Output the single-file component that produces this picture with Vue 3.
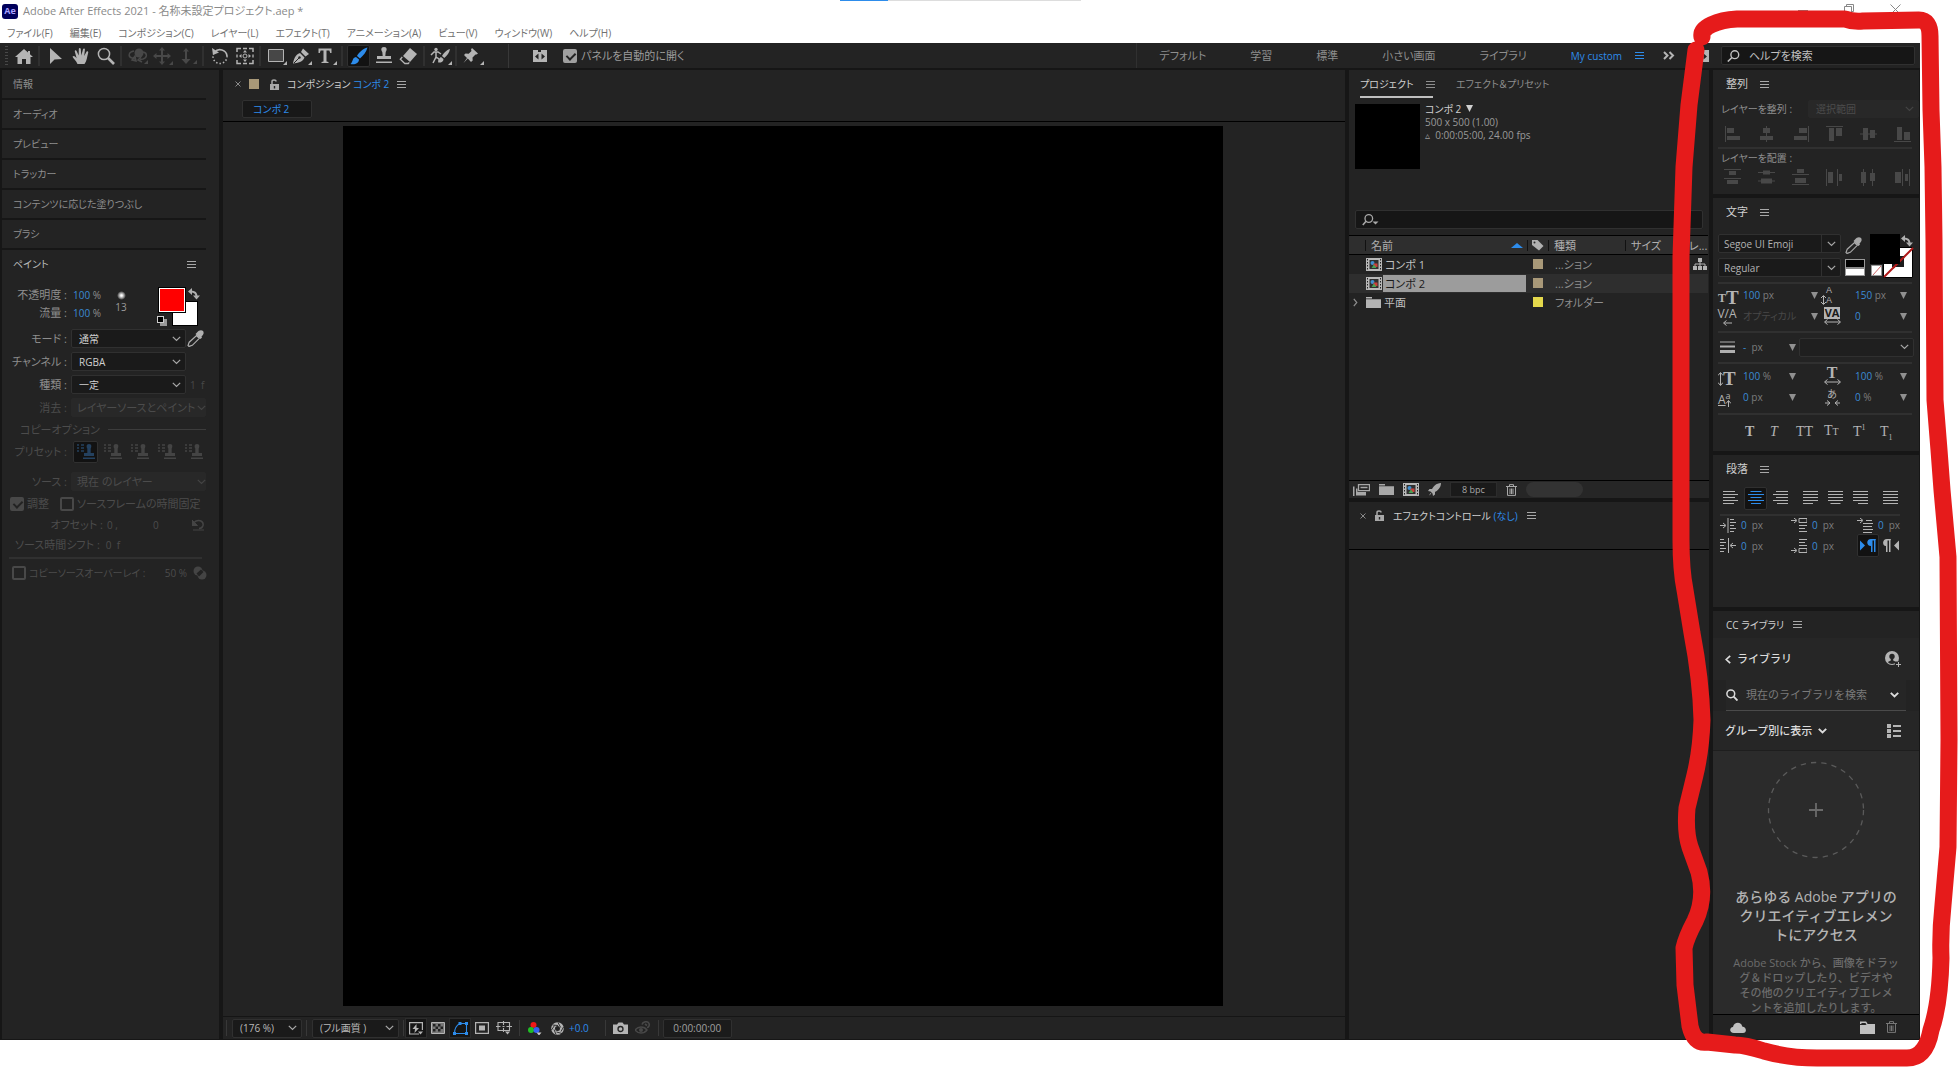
<script setup>
import { h } from 'vue'

const glyphs = {
  home: [18, 16, '<path d="M9 1 0 9h2.500v7H7v-5h4v5h4.500V9H18l-3-2.700V3h-2v1.500z" fill="currentColor"/>'],
  arrow: [14, 18, '<path d="M1 1v16l4.500-4.500L13 12z" fill="currentColor"/>'],
  hand: [18, 18, '<path d="M5.500 17C4 14 2 12 .5 9.800c.6-1 1.700-1 2.500-.2l1.600 1.600L2.800 4.500c-.2-1.300 1.300-1.800 1.800-.6L6.700 8.600 6.800 2c.1-1.300 1.800-1.300 2 0l.5 6.500L11 2.300c.4-1.200 2-.9 1.900.4L12.200 9l2.300-4.200c.7-1 2-.3 1.700.9C15 9.700 15 14 12.500 17z" fill="currentColor"/>'],
  zoom: [18, 18, '<circle cx="7" cy="7" r="5.600" fill="none" stroke="currentColor" stroke-width="1.500"/><path d="M11 11l6 6" stroke="currentColor" stroke-width="2.600"/>'],
  orbit: [20, 18, '<circle cx="11" cy="6" r="4.500" fill="currentColor"/><path d="M6 4C0 5 0 10 4 11l3 1M15 5c5 1 4 6 0 7l-3 .5M7 9l1 5-4-1zM13 10l-3 3 4 2" fill="none" stroke="currentColor" stroke-width="1.500"/><path d="M20 13v4h-4z" fill="currentColor"/>'],
  pan: [20, 18, '<path d="M9 0l3 3.500h-2V8h4.500V6L18 9l-3.500 3v-2H10v4.500h2L9 18l-3-3.500h2V10H3.500v2L0 9l3.500-3v2H8V3.500H6z" fill="currentColor"/><path d="M20 14v4h-4z" fill="currentColor"/>'],
  dolly: [18, 18, '<path d="M7 1l3 3.500H8V12h3.500L7 17l-4.500-5H6V4.500H4z" fill="currentColor"/><path d="M18 13v4h-4z" fill="currentColor"/>'],
  rotate: [18, 18, '<path d="M3.500 5.500A7 7 0 0 1 16 9" fill="none" stroke="currentColor" stroke-width="1.700"/><path d="M1 1l1 7 6-2.500z" fill="currentColor"/><path d="M16 9A7 7 0 1 1 2.500 7" fill="none" stroke="currentColor" stroke-width="1.500" stroke-dasharray="1.500 2"/>'],
  anchor: [18, 18, '<path d="M1 5V1.500h4M13 1.500h4V5M17 13v3.500h-4M5 16.500H1V13" fill="none" stroke="currentColor" stroke-width="1.500"/><path d="M7 1.500h4M7 16.500h4M1 7.500v3M17 7.500v3" stroke="currentColor" stroke-width="1.300"/><circle cx="9" cy="9" r="2" fill="none" stroke="currentColor"/><path d="M9 3l2 2.500H7zM9 15l2-2.500H7zM3 9l2.500-2v4zM15 9l-2.500-2v4z" fill="currentColor"/>'],
  rect: [20, 18, '<path d="M1.500 2.500h15v12h-15z" fill="#474747" stroke="currentColor"/><path d="M20 14v4h-4z" fill="currentColor"/>'],
  pen: [20, 18, '<path d="M1 16.500C2 12 3 8 8 6l4.500 4.500C11 15 6 16 1 16.500zM9 5l2-3.500L17 7l-3.500 2.500z" fill="currentColor"/><path d="M2 16l5-5" stroke="#232323"/><circle cx="7.500" cy="10.500" r="1.200" fill="#232323"/><path d="M20 14v4h-4z" fill="currentColor"/>'],
  type: [20, 18, '<path d="M1.500 1.500h13V6h-1.300l-.8-2.500H9.500v11l2 .5v1h-7v-1l2-.5v-11H3.600L2.800 6H1.500z" fill="currentColor"/><path d="M20 14v4h-4z" fill="currentColor"/>'],
  brush: [18, 18, '<path d="M17.500.5C13 1.500 8.500 6 7 9l3 2.500c3.500-3 6.500-7 7.500-11zM6 10l3 2.500c0 3.500-4 5.500-8.500 4.500C3 15.500 2 10.500 6 10z" fill="currentColor"/>'],
  stamp: [18, 18, '<path d="M9 0c3.500 0 3 3.500 1.700 5L10.300 9H16v3H2V9h5.700l-.4-4C6 3.500 5.500 0 9 0zM1 14.500h16V16H1z" fill="currentColor"/>'],
  eraser: [20, 18, '<path d="M11 1l7 6-7 8-7-6z" fill="currentColor"/><path d="M3.300 10l-2 2.300 4.500 4.200h3.500l1-1.200" fill="none" stroke="currentColor" stroke-width="1.300"/>'],
  roto: [22, 18, '<circle cx="6" cy="2.500" r="1.700" fill="currentColor"/><path d="M1 8l3-3h4l3 2M6 5v5l-3 6M6 10l3 2v3" fill="none" stroke="currentColor" stroke-width="1.500"/><path d="M20 2c-4 1-7 5-8 7l2.300 2c3-2.500 5-5 5.700-9zM11 10l2.500 2c0 3-3 4-5.500 3.500 1.500-1 .5-4.500 3-5.500z" fill="currentColor"/><path d="M22 14v4h-4z" fill="currentColor"/>'],
  pin: [22, 18, '<path d="M10 1l6 5.500-1.500 1-1 0-3 3 .2 3L9 15l-3.200-3.500L1.500 16l3.500-5-3-3 1.500-1.500 3.200.2L9.500 4 9 2.500z" fill="currentColor"/><path d="M22 14v4h-4z" fill="currentColor"/>'],
  panels: [14, 13, '<path d="M0 1h5v2h3V1h6v12H0z" fill="currentColor"/><path d="M5.500 4.500v6L2 7.500zM8.500 4.500v6L12 7.500z" fill="#232323"/>'],
  menu: [9, 9, '<path d="M0 1.500h9M0 4.500h9M0 7.500h9" stroke="currentColor"/>'],
  chev: [9, 6, '<path d="M.8.800 4.500 4.500 8.200.800" fill="none" stroke="currentColor" stroke-width="1.200"/>'],
  chevBold: [9, 6, '<path d="M.8.800 4.500 4.500 8.200.800" fill="none" stroke="currentColor" stroke-width="1.900"/>'],
  back: [6, 9, '<path d="M5.200.800 1.200 4.500l4 3.700" fill="none" stroke="currentColor" stroke-width="1.700"/>'],
  more: [12, 9, '<path d="M1 1l3.500 3.500L1 8M6.500 1 10 4.500 6.500 8" fill="none" stroke="currentColor" stroke-width="2"/>'],
  close: [6, 6, '<path d="M.5.500l5 5M5.500.500l-5 5" stroke="#8a8a8a" stroke-width="1"/>'],
  lock: [9, 11, '<path d="M0 5h9v6H0z" fill="currentColor"/><path d="M2 5V2.500C2 .5 6 .5 6 2.500" fill="none" stroke="currentColor" stroke-width="1.500"/><path d="M4.500 7v2.500" stroke="#232323" stroke-width="1.400"/>'],
  search: [13, 12, '<circle cx="7.800" cy="4.700" r="3.900" fill="none" stroke="currentColor" stroke-width="1.400"/><path d="M5 7.500.8 11.500" stroke="currentColor" stroke-width="1.600"/>'],
  searchMenu: [17, 12, '<circle cx="6.800" cy="4.500" r="3.800" fill="none" stroke="currentColor" stroke-width="1.300"/><path d="M4 7.300.8 11" stroke="currentColor" stroke-width="1.600"/><path d="M10.500 7.500h6l-3 3z" fill="currentColor"/>'],
  find: [12, 12, '<circle cx="4.800" cy="4.800" r="3.900" fill="none" stroke="currentColor" stroke-width="1.500"/><path d="M7.700 7.700l3.800 3.800" stroke="currentColor" stroke-width="1.900"/>'],
  swap: [12, 12, '<path d="M3 3.500c4 0 5.500 1.500 5.500 5" fill="none" stroke="currentColor" stroke-width="2"/><path d="M0 3.500 4 0v7zM5 7.500h7l-3.500 4z" fill="currentColor"/>'],
  dropper: [17, 17, '<path d="M10 2.500C12-.5 15-.2 16 1s1 3.500-1.500 5.500l.5 1-1.500 1.500L8.500 4 10 2.500z" fill="currentColor"/><path d="M9.500 5.500l2.800 2.800-7 7c-1.300.7-2 .5-3.300 1.200l-1-1c.7-1.300.5-2 1.200-3.300z" fill="none" stroke="currentColor" stroke-width="1.200"/>'],
  preset: [18, 16, '<path d="M0 1h2M0 4h2M0 7h2M4 1h3M4 4h3M4 7h3" stroke="currentColor" stroke-width="1.300"/><path d="M12 0c3 0 2.600 3 1.700 4.500V9H17v3H7V9h3.300V4.500C9.400 3 9 0 12 0zM6 13.500h12V15H6z" fill="currentColor"/>'],
  undo: [13, 12, '<path d="M2 3.500C6-.5 12 2 11 6.500 10.500 8.500 9 9.500 7 9.500" fill="none" stroke="currentColor" stroke-width="1.500"/><path d="M0 1v5.500h5.500zM1 11h11" stroke="currentColor" fill="currentColor"/>'],
  overlay: [14, 14, '<circle cx="5" cy="5" r="4.500" fill="currentColor"/><circle cx="9" cy="9" r="4.500" fill="currentColor"/><path d="M3.500 7.500 8 3.500 10.500 6 6 10.500z" fill="#232323"/>'],
  comp: [16, 13, '<path d="M0 0h16v13H0z" fill="#b8b8b8"/><path d="M1.500 1v11M14.500 1v11" stroke="#232323" stroke-dasharray="1.500 1.500"/><path d="M3.500 2h9v9h-9z" fill="#303030"/><circle cx="6.500" cy="5" r="2" fill="#3f8fd0"/><path d="M7.500 5.500h4v3.500h-4z" fill="#c8403a"/><path d="M8 6.500l2.500 3.500H5.500z" fill="#4aa055"/>'],
  folder: [15, 11, '<path d="M0 0h6v1.500H0zM0 2.200h15V11H0z" fill="currentColor"/>'],
  folderNew: [15, 13, '<path d="M.7 3V1.200h5L7 3" fill="none" stroke="currentColor" stroke-width="1.400"/><path d="M0 4h5.500l1.500-1H15v10H0z" fill="currentColor"/>'],
  tag: [13, 12, '<path d="M1 1h5.500L12.500 7 8 11.500 1 6z" fill="currentColor"/><circle cx="3.500" cy="3.500" r="1" fill="#2d2d2d"/>'],
  flow: [14, 12, '<path d="M5 0h4v4H5zM0 8h4v4H0zM5 8h4v4H5zM10 8h4v4h-4z" fill="currentColor"/><path d="M7 4v4M2 8V6h10v2" fill="none" stroke="currentColor"/>'],
  twirl: [5, 9, '<path d="M.8.800l3 3.700-3 3.700" fill="none" stroke="currentColor" stroke-width="1.200"/>'],
  interpret: [17, 12, '<path d="M5.500.700h11v6h-11z" fill="none" stroke="currentColor" stroke-width="1.300"/><path d="M7.500 3.500h7" stroke="currentColor" stroke-width="1.500"/><path d="M3 4.500h1.500V8H13v3.500H3zM0 2.500h1.500V12H0z" fill="currentColor"/>'],
  rocket: [13, 13, '<path d="M13 0C8 0 5 4 4 6H1.500L0 8l2.500.500 2 2L5 13l2-1.500V9c2-1 6-4 6-9zM2.500 10l.8.800L1 12.500z" fill="currentColor"/>'],
  trash: [11, 12, '<path d="M0 2.500h11M3.500 2V.600h4V2M1.500 3v8.400h8V3M4 4.500v5.500M5.500 4.500v5.500M7 4.500v5.500" fill="none" stroke="currentColor"/>'],
  fast: [14, 13, '<path d="M10 12H.6V.600h12.800V8" fill="none" stroke="currentColor" stroke-width="1.200"/><path d="M7.500 2 3.500 7h2.500L5.500 11 10 6H7.500zM9 9.500h5l-2.500 3z" fill="currentColor"/>'],
  checker: [14, 12, '<path d="M.5.500h13v11H.5z" fill="#777" stroke="currentColor"/><path d="M2 2h2.500v2.500H2zM7 2h2.500v2.500H7zM4.500 4.500H7V7H4.500zM9.500 4.500H12V7H9.500zM2 7h2.500v2.500H2zM7 7h2.500v2.500H7z" fill="#222"/>'],
  mask: [15, 13, '<path d="M1.500 11.500C1.500 6 4 3 7 1.500h6.500v10z" fill="none" stroke="currentColor" stroke-width="1.100"/><path d="M0 10h3v3H0zM12 10h3v3h-3zM12 0h3v3h-3zM5.500 0h3v3h-3z" fill="currentColor"/>'],
  region: [14, 12, '<path d="M.6.600h12.800v10.800H.600z" fill="none" stroke="currentColor" stroke-width="1.200"/><path d="M4 3.500h6v5H4z" fill="currentColor"/>'],
  guides: [16, 14, '<path d="M2 1.500h11.500v8H2zM7.500 0v4M7.500 7v4M0 5.500h4.500M10.500 5.500H16M6.500 5.500h2" fill="none" stroke="currentColor" stroke-width="1.100"/><path d="M9 10.500h5l-2.500 3z" fill="currentColor"/>'],
  rgb: [14, 13, '<circle cx="5.500" cy="3" r="3" fill="#f01818"/><circle cx="3" cy="8" r="3" fill="#1fbf25"/><circle cx="8.500" cy="8" r="3" fill="#3560f0"/><path d="M8.500 10.500h5l-2.500 3z" fill="#ccc"/>'],
  shutter: [13, 13, '<circle cx="6.500" cy="6.500" r="4.400" fill="none" stroke="currentColor" stroke-width="3.800"/><path d="M1.500 3l5.500.5M7 .5l2.700 5M12.500 5l-2.500 4.500M11 11.500 5.500 10M5 12.500l-2-5M.500 8l3-4.500" stroke="#232323" stroke-width=".9"/>'],
  camera: [15, 12, '<path d="M0 2.500h4L5.500.500h4L11 2.500h4V12H0z" fill="currentColor"/><circle cx="7.500" cy="7" r="2.500" fill="none" stroke="#232323" stroke-width="1.300"/>'],
  snap: [16, 14, '<path d="M0 9c3-4 9-4 12 0-3 4-9 4-12 0z" fill="none" stroke="currentColor" stroke-width="1.400"/><circle cx="6" cy="9" r="2" fill="currentColor"/><path d="M7 3.500C8 0 13 0 14 2.500s-1 4-2 4M10 3l2 1.500" fill="none" stroke="currentColor" stroke-width="1.600"/>'],
  alL: [16, 16, '<path d="M.5 0v16" stroke="currentColor"/><path d="M2 2h7v5H2zM2 10h13v4H2z" fill="currentColor"/>'],
  alC: [16, 16, '<path d="M7.500 0v16" stroke="currentColor"/><path d="M4 2h7v5H4zM1 10h13v4H1z" fill="currentColor"/>'],
  alR: [16, 16, '<path d="M15.500 0v16" stroke="currentColor"/><path d="M6 2h8v5H6zM1 10h13v4H1z" fill="currentColor"/>'],
  alT: [17, 16, '<path d="M0 .500h17" stroke="currentColor"/><path d="M3 2h5v13H3zM10 2h6v8h-6z" fill="currentColor"/>'],
  alM: [17, 16, '<path d="M0 8h17" stroke="currentColor"/><path d="M3 2h5v12H3zM10 4h5v8h-5z" fill="currentColor"/>'],
  alB: [17, 16, '<path d="M0 15.500h17" stroke="currentColor"/><path d="M3 1h5v13H3zM10 6h6v8h-6z" fill="currentColor"/>'],
  diT: [17, 16, '<path d="M0 .500h17M0 9.500h17" stroke="currentColor"/><path d="M5 2h7v4H5zM3 11h11v4H3z" fill="currentColor"/>'],
  diM: [17, 16, '<path d="M0 3.500h17M0 12h17" stroke="currentColor"/><path d="M5 1.500h7v4H5zM3 9.500h11v5H3z" fill="currentColor"/>'],
  diB: [17, 16, '<path d="M0 5.500h17M0 15.500h17" stroke="currentColor"/><path d="M5 0h7v4H5zM3 9h11v5H3z" fill="currentColor"/>'],
  diL: [16, 17, '<path d="M.5 0v17M11.500 0v17" stroke="currentColor"/><path d="M2 3h5v11H2zM13 5h3v7h-3z" fill="currentColor"/>'],
  diC: [16, 17, '<path d="M3.500 0v17M12.500 0v17" stroke="currentColor"/><path d="M1 3h5v11H1zM10 4h5v8h-5z" fill="currentColor"/>'],
  diR: [16, 17, '<path d="M8.500 0v17M15.500 0v17" stroke="currentColor"/><path d="M1 3h6v11H1zM11 5h3v7h-3z" fill="currentColor"/>'],
  updown: [5, 14, '<path d="M2.500 1v12M0 3.500 2.500.500 5 3.500M0 10.500l2.500 3 2.500-3" fill="none" stroke="currentColor"/>'],
  updownS: [5, 10, '<path d="M2.500 1v8M0 3 2.500.500 5 3M0 7l2.500 2.500L5 7" fill="none" stroke="currentColor"/>'],
  leftright: [17, 6, '<path d="M1 3h15M3.500.500.500 3l3 2.500M13.500.500l3 2.500-3 2.500" fill="none" stroke="currentColor"/>'],
  left: [9, 6, '<path d="M1 3h8M3.500.500.500 3l3 2.500" fill="none" stroke="currentColor"/>'],
  inout: [15, 6, '<path d="M0 3h4M2 .500 5 3 2 5.500M15 3h-4M13 .500 10 3l3 2.500" fill="none" stroke="currentColor"/>'],
  up: [5, 7, '<path d="M2.500 1v6M0 3.500 2.500.500 5 3.500" fill="none" stroke="currentColor"/>'],
  stroke: [15, 12, '<path d="M0 1h15" stroke="currentColor"/><path d="M0 5.500h15" stroke="currentColor" stroke-width="2"/><path d="M0 10.500h15" stroke="currentColor" stroke-width="3"/>'],
  down: [7, 7, '<path d="M0 0h7L3.500 7z" fill="currentColor"/>'],
  tL: [15, 14, '<path d="M0 .500h12M0 3.500h15M0 6.500h12M0 9.500h15M0 12.500h11" stroke="currentColor"/>'],
  tC: [16, 14, '<path d="M2.500 .500h11M0 3.500h16M2.500 6.500h11M0 9.500h16M3 12.500h10" stroke="currentColor"/>'],
  tR: [15, 14, '<path d="M3 .500h12M0 3.500h15M3 6.500h12M0 9.500h15M4 12.500h11" stroke="currentColor"/>'],
  jL: [15, 14, '<path d="M0 .500h15M0 3.500h15M0 6.500h15M0 9.500h15M0 12.500h10" stroke="currentColor"/>'],
  jC: [15, 14, '<path d="M0 .500h15M0 3.500h15M0 6.500h15M0 9.500h15M2.500 12.500h10" stroke="currentColor"/>'],
  jR: [15, 14, '<path d="M0 .500h15M0 3.500h15M0 6.500h15M0 9.500h15M5 12.500h10" stroke="currentColor"/>'],
  jF: [15, 14, '<path d="M0 .500h15M0 3.500h15M0 6.500h15M0 9.500h15M0 12.500h15" stroke="currentColor"/>'],
  indL: [16, 15, '<path d="M0 7.500h5M3 5l3 2.500L3 10M8 0v15M10 1.500h4M10 4.500h6M10 7.500h4M10 10.500h6M10 13.500h4" fill="none" stroke="currentColor"/>'],
  indR: [16, 15, '<path d="M16 7.500h-5M13 5l-3 2.500L13 10M8.500 0v15M0 1.500h4M0 4.500h6M0 7.500h4M0 10.500h6M0 13.500h4" fill="none" stroke="currentColor"/>'],
  spB: [16, 15, '<path d="M0 2.500h5M3 0l3 2.500L3 5M8 .500h8v4H8zM8 7.500h8M8 10.500h6M8 13.500h8" fill="none" stroke="currentColor"/>'],
  spA: [16, 15, '<path d="M0 12.500h5M3 10l3 2.500L3 15M8 10.500h8v4H8zM8 1.500h8M8 4.500h6M8 7.500h8" fill="none" stroke="currentColor"/>'],
  first: [16, 15, '<path d="M0 2.500h5M3 0l3 2.500L3 5M9 2.500h6M6 5.500h10M6 8.500h9M6 11.500h10M6 14.500h9" fill="none" stroke="currentColor"/>'],
  ltr: [17, 13, '<path d="M0 1.500l5 5-5 5zM16 0h-5C6 0 6 7 11 7v6h1.500V1.500H14V13h1.500V1.500z" fill="currentColor"/>'],
  rtl: [17, 13, '<path d="M17 1.500l-5 5 5 5zM9 0H5C0 0 0 7 4 7v6h1.500V1.500H7V13h1.500V1.500z" fill="currentColor"/>'],
  user: [16, 16, '<circle cx="7" cy="7" r="7" fill="currentColor"/><circle cx="7" cy="5.500" r="2.700" fill="#262626"/><path d="M5.800 8h2.400v1.500l3 1.500C9.500 13.500 4.500 13.500 2.800 11l3-1.500zM10 10.500h6V16h-6z" fill="#262626"/><path d="M13.500 11v5M11 13.500h5" stroke="currentColor"/>'],
  list: [14, 14, '<path d="M0 0h4v4H0zM0 5h4v4H0zM0 10h4v4H0zM6 1h8v2H6zM6 6h8v2H6zM6 11h8v2H6z" fill="currentColor"/>'],
  cloud: [16, 11, '<path d="M4 11C-1 11-.8 5.500 3 5 4-.5 11.500-.5 12.200 4.500 17 5 17 11 13 11z" fill="currentColor"/>'],
  ring: [98, 98, '<circle cx="49" cy="49" r="47.500" fill="none" stroke="#5a5a5a" stroke-width="1.300" stroke-dasharray="5.300 5.100"/><path d="M49 42v14M42 49h14" stroke="#6a6a6a" stroke-width="1.800"/>']
}
const Icon = (p) => {
  const [w, ht, d] = glyphs[p.n]
  return h('svg', { width: w, height: ht, viewBox: `0 0 ${w} ${ht}`, 'aria-hidden': 'true', innerHTML: d })
}
Icon.props = ['n']

const menus = ['ファイル(F)', '編集(E)', 'コンポジション(C)', 'レイヤー(L)', 'エフェクト(T)', 'アニメーション(A)', 'ビュー(V)', 'ウィンドウ(W)', 'ヘルプ(H)']
const tools = [['home'], ['arrow', 'hand', 'zoom'], ['orbit', 'pan', 'dolly'], ['rotate', 'anchor'], ['rect', 'pen', 'type'], ['brush', 'stamp', 'eraser'], ['roto'], ['pin']]
const dimTools = ['orbit', 'pan', 'dolly']
const workspaces = ['デフォルト', '学習', '標準', '小さい画面', 'ライブラリ']
const closedPanels = ['情報', 'オーディオ', 'プレビュー', 'トラッカー', 'コンテンツに応じた塗りつぶし', 'ブラシ']
const paintSelects = [['モード :', '通常', 'mode'], ['チャンネル :', 'RGBA', 'channel'], ['種類 :', '一定', 'duration']]
const items = [
  { name: 'コンポ 1', type: '...ション', icon: 'comp', flow: true },
  { name: 'コンポ 2', type: '...ション', icon: 'comp', selected: true },
  { name: '平面', type: 'フォルダー', icon: 'folder', folder: true }
]
</script>

<template>
  <div class="page">
    <header class="titlebar">
      <span class="logo">Ae</span>
      <h1>Adobe After Effects 2021 - 名称未設定プロジェクト.aep *</h1>
      <div class="winctl">
        <svg width="10" height="11"><path d="M0 6.500h10" stroke="#888" /></svg>
        <svg width="10" height="11"><path d="M.5 2.500h7v7h-7zM2.500 2V.500h7v7H8" fill="none" stroke="#888" /></svg>
        <svg width="11" height="11"><path d="M.5.500l10 10M10.500.500l-10 10" stroke="#888" /></svg>
      </div>
      <i class="strip"></i>
    </header>
    <nav class="menubar"><button v-for="m in menus" :key="m">{{ m }}</button></nav>

    <div class="window">
      <div class="toolbar">
        <i class="grip"></i>
        <div v-for="(g, i) in tools" :key="i" class="toolgroup">
          <button v-for="t in g" :key="t" class="tool" :class="{ on: t === 'brush', dim: dimTools.includes(t) }" :aria-label="t"><span><Icon :n="t" /></span></button>
        </div>
        <i class="vsep wide"></i>
        <Icon n="panels" class="panelicon" />
        <label class="auto"><input type="checkbox" checked />パネルを自動的に開く</label>
        <div class="spaces">
          <button v-for="w in workspaces" :key="w">{{ w }}</button>
          <button class="current">My custom<Icon n="menu" /></button>
        </div>
        <button class="more" aria-label="more"><Icon n="more" /></button>
        <Icon n="panels" class="syncicon" />
        <label class="help"><Icon n="search" /><input type="text" placeholder="ヘルプを検索" aria-label="ヘルプを検索" /></label>
      </div>

      <main>
        <section class="panel left">
          <h2 v-for="c in closedPanels" :key="c" class="closed">{{ c }}</h2>
          <div class="head"><h2>ペイント</h2><Icon n="menu" class="end" /></div>
          <div class="painttop">
            <dl>
              <dt>不透明度 :</dt><dd><button class="val">100</button> %</dd>
              <dt>流量 :</dt><dd><button class="val">100</button> %</dd>
            </dl>
            <div class="tip"><i></i>13</div>
            <div class="swatches">
              <i class="bg"></i><i class="fg"></i><Icon n="swap" class="swap" /><i class="mini"></i>
            </div>
          </div>
          <div v-for="(s, i) in paintSelects" :key="s[2]" class="prow">
            <label :for="s[2]">{{ s[0] }}</label>
            <span class="sel"><select :id="s[2]"><option>{{ s[1] }}</option></select><Icon n="chev" /></span>
            <Icon v-if="i === 0" n="dropper" />
            <span v-if="i === 2" class="dimtext">1&nbsp; f</span>
          </div>
          <div class="prow off">
            <label for="erase">消去 :</label>
            <span class="sel full"><select id="erase" disabled><option>レイヤーソースとペイント</option></select><Icon n="chev" /></span>
          </div>
          <div class="prow off clone"><span>コピーオプション</span><i></i></div>
          <div class="prow off presets">
            <span class="lab">プリセット :</span>
            <button v-for="n in 5" :key="n" disabled :class="{ on: n === 1 }" :aria-label="'プリセット ' + n"><Icon n="preset" /></button>
          </div>
          <div class="prow off source">
            <label for="src">ソース :</label>
            <span class="sel full"><select id="src" disabled><option>現在 のレイヤー</option></select><Icon n="chev" /></span>
          </div>
          <div class="prow off checks">
            <label><input type="checkbox" checked disabled />調整</label>
            <label><input type="checkbox" disabled />ソースフレームの時間固定</label>
          </div>
          <div class="prow off offset"><span>オフセット :</span><span>0 ,</span><span>0</span><Icon n="undo" /></div>
          <div class="prow off shift"><span>ソース時間シフト :</span><span>0&nbsp; f</span></div>
          <i class="rule"></i>
          <div class="prow off over"><label><input type="checkbox" disabled />コピーソースオーバーレイ :</label><span>50 %</span><Icon n="overlay" /></div>
        </section>

        <section class="panel centre">
          <div class="head viewhead">
            <Icon n="close" /><i class="sq"></i><Icon n="lock" />
            <h2 class="lit">コンポジション <em>コンポ 2</em></h2><Icon n="menu" />
          </div>
          <div class="tabs"><button>コンポ 2</button></div>
          <div class="stage"><div class="canvas"></div></div>
          <div class="viewbar">
            <i class="vsep"></i>
            <span class="sel zoomsel"><select aria-label="拡大率"><option>(176 %)</option></select><Icon n="chev" /></span>
            <i class="vsep"></i>
            <span class="sel ressel"><select aria-label="解像度"><option>(フル画質 )</option></select><Icon n="chev" /></span>
            <i class="vsep"></i>
            <button class="vb box" aria-label="高速プレビュー"><Icon n="fast" /></button>
            <button class="vb" aria-label="透明グリッド"><Icon n="checker" /></button>
            <button class="vb box on" aria-label="マスク"><Icon n="mask" /></button>
            <button class="vb" aria-label="目標範囲"><Icon n="region" /></button>
            <button class="vb" aria-label="ガイド"><Icon n="guides" /></button>
            <i class="vsep gap"></i>
            <button class="vb" aria-label="チャンネル"><Icon n="rgb" /></button>
            <button class="vb" aria-label="露出"><Icon n="shutter" /></button>
            <button class="val expo">+0.0</button>
            <i class="vsep"></i>
            <button class="vb cam" aria-label="スナップショット"><Icon n="camera" /></button>
            <button class="vb dim" aria-label="スナップショットを表示"><Icon n="snap" /></button>
            <i class="vsep"></i>
            <button class="time">0:00:00:00</button>
          </div>
        </section>

        <div class="col">
          <section class="panel project">
            <div class="head">
              <div class="tab"><h2 class="lit">プロジェクト</h2><Icon n="menu" /></div>
              <h2>エフェクト＆プリセット</h2>
            </div>
            <div class="info">
              <div class="thumb"></div>
              <div><p class="lit">コンポ 2 <Icon n="down" /></p><p>500 x 500 (1.00)</p><p>▵&nbsp; 0:00:05:00, 24.00 fps</p></div>
            </div>
            <label class="psearch"><Icon n="searchMenu" /><input type="text" aria-label="プロジェクトを検索" /></label>
            <table>
              <thead>
                <tr><th class="c0"></th><th class="c1"><span>名前<i class="tri"></i></span></th><th class="c2"><Icon n="tag" /></th><th class="c3">種類</th><th class="c4">サイズ</th><th>レ...</th></tr>
              </thead>
              <tbody>
                <tr v-for="it in items" :key="it.name" :class="{ selected: it.selected }">
                  <td class="c0"><Icon v-if="it.folder" n="twirl" /></td>
                  <td class="name"><span><Icon :n="it.icon" /><b>{{ it.name }}</b></span></td>
                  <td class="c2"><i class="sq" :class="{ yellow: it.folder }"></i></td>
                  <td class="c3">{{ it.type }}</td>
                  <td></td>
                  <td class="c5"><Icon v-if="it.flow" n="flow" /></td>
                </tr>
              </tbody>
            </table>
            <div class="pfoot">
              <Icon n="interpret" /><Icon n="folder" /><Icon n="comp" /><Icon n="rocket" />
              <button class="bpc">8 bpc</button><Icon n="trash" /><i class="pill"></i>
            </div>
          </section>
          <section class="panel effects">
            <div class="head viewhead"><Icon n="close" /><Icon n="lock" /><h2 class="lit">エフェクトコントロール <em>(なし)</em></h2><Icon n="menu" /></div>
          </section>
        </div>

        <div class="col right">
          <section class="panel align">
            <div class="head kanji"><h2 class="lit">整列</h2><Icon n="menu" /></div>
            <div class="arow"><label for="al">レイヤーを整列 :</label><span class="sel off"><select id="al" disabled><option>選択範囲</option></select><Icon n="chev" /></span></div>
            <div class="aicons first"><button v-for="n in ['alL', 'alC', 'alR', 'alT', 'alM', 'alB']" :key="n" disabled :aria-label="n"><Icon :n="n" /></button></div>
            <i class="rule"></i>
            <div class="arow second">レイヤーを配置 :</div>
            <div class="aicons"><button v-for="n in ['diT', 'diM', 'diB', 'diL', 'diC', 'diR']" :key="n" disabled :aria-label="n"><Icon :n="n" /></button></div>
          </section>

          <section class="panel char">
            <div class="head kanji"><h2 class="lit">文字</h2><Icon n="menu" /></div>
            <div class="fontrow">
              <div class="fonts">
                <span class="sel split"><select aria-label="フォント"><option>Segoe UI Emoji</option></select><Icon n="chev" /></span>
                <span class="sel split"><select aria-label="スタイル"><option>Regular</option></select><Icon n="chev" /></span>
              </div>
              <div class="pick"><Icon n="dropper" /><i class="bw"></i></div>
              <div class="fills">
                <svg width="44" height="44" viewBox="0 0 44 44"><path d="M13.500 13.500h29v30h-29z" fill="#fff" stroke="#000" /><path d="M14 43 43 14" stroke="#b01818" stroke-width="2" /><path d="M22 22h12v11H22z" fill="#1b1b1b" /><path d="M23 34 34 23" stroke="#b01818" stroke-width="2" /><path d="M0 0h30v30H0z" fill="#000" /><path d="M1.500 31.500h10v10h-10z" fill="#fff" stroke="#999" /><path d="M3 41l8-9" stroke="#c66" /></svg>
                <Icon n="swap" class="swap" />
              </div>
            </div>
            <i class="rule"></i>
            <div class="crow tall">
              <span class="gi"><b class="sm">T</b><b class="lg">T</b></span><span><button class="val">100</button> px</span><Icon n="down" />
              <span class="gi"><Icon n="updownS" /><span class="stack"><u>A</u><u>A</u></span></span><span><button class="val">150</button> px</span><Icon n="down" />
            </div>
            <div class="crow">
              <span class="gi va">V/A<Icon n="left" /></span><span class="dimtext">オプティカル</span><Icon n="down" />
              <span class="gi va"><mark>VA</mark><Icon n="leftright" /></span><span><button class="val">0</button></span><Icon n="down" />
            </div>
            <i class="rule r2"></i>
            <div class="crow stroke"><Icon n="stroke" /><span><button class="val">-</button>&nbsp; px</span><Icon n="down" /><span class="sel"><select aria-label="線の種類"><option></option></select><Icon n="chev" /></span></div>
            <i class="rule r3"></i>
            <div class="crow low tall">
              <span class="gi"><Icon n="updown" /><b class="lg">T</b></span><span><button class="val">100</button> %</span><Icon n="down" />
              <span class="gi va"><b class="md">T</b><Icon n="leftright" /></span><span><button class="val">100</button> %</span><Icon n="down" />
            </div>
            <div class="crow low">
              <span class="gi base"><u>A</u><span class="stack"><span>a</span><Icon n="up" /></span></span><span><button class="val">0</button> px</span><Icon n="down" />
              <span class="gi va"><small>あ</small><Icon n="inout" /></span><span><button class="val">0</button> %</span><Icon n="down" />
            </div>
            <i class="rule r4"></i>
            <div class="styles">
              <button><b>T</b></button><button class="it">T</button><button>TT</button><button>T<small>T</small></button><button>T<sup>1</sup></button><button>T<sub>1</sub></button>
            </div>
          </section>

          <section class="panel para">
            <div class="head kanji"><h2 class="lit">段落</h2><Icon n="menu" /></div>
            <div class="justify">
              <button v-for="n in ['tL', 'tC', 'tR', 'jL', 'jC', 'jR', 'jF']" :key="n" :aria-label="n" :class="[n, { on: n === 'tC' }]"><Icon :n="n" /></button>
            </div>
            <i class="rule"></i>
            <div class="indents">
              <span><Icon n="indL" /><button class="val">0</button> px</span><span><Icon n="spB" /><button class="val">0</button> px</span><span><Icon n="first" /><button class="val">0</button> px</span>
              <span><Icon n="indR" /><button class="val">0</button> px</span><span><Icon n="spA" /><button class="val">0</button> px</span>
              <span class="dir"><button class="on" aria-label="左から右"><Icon n="ltr" /></button><button aria-label="右から左"><Icon n="rtl" /></button></span>
            </div>
          </section>

          <section class="panel cc">
            <div class="head"><h2 class="lit">CC ライブラリ</h2><Icon n="menu" /></div>
            <div class="ccbar lib"><a href="#"><Icon n="back" />ライブラリ</a><Icon n="user" class="grey" /></div>
            <label class="ccbar ccsearch"><Icon n="find" /><input type="text" placeholder="現在のライブラリを検索" aria-label="現在のライブラリを検索" /><Icon n="chevBold" /></label>
            <div class="ccbar group"><button>グループ別に表示<Icon n="chevBold" /></button><Icon n="list" class="grey" /></div>
            <div class="drop">
              <Icon n="ring" />
              <h3>あらゆる Adobe アプリの<br />クリエイティブエレメン<br />トにアクセス</h3>
              <p>Adobe Stock から、画像をドラッ<br />グ＆ドロップしたり、ビデオや<br />その他のクリエイティブエレメ<br />ントを追加したりします。</p>
            </div>
            <div class="ccfoot"><Icon n="cloud" /><Icon n="folderNew" class="end" /><Icon n="trash" class="bin" /></div>
          </section>
        </div>
      </main>
    </div>

    <svg class="marker" viewBox="0 0 290 1069" preserveAspectRatio="none">
      <path d="M33 37C31 27 49 20 68 19L176 19Q184 22 194 21L250 20Q261 20 261 36L262 110L264 167L265 240L266 400L270 450L273 490L279 557L280 740L279 847L274 905Q271 933 272 958Q271 1004 262 1030Q257 1058 238 1058L148 1058Q120 1058 95 1051Q76 1045 66 1045L38 1042Q25 1044 21 1026L16 985L15 948Q17 938 26 921Q37 898 30 872L21 847Q16 832 18 808L26 775Q32 750 33 720Q32 680 23 633L16 590Q12 570 12 540L12 257L15 167L20 105L27 50" fill="none" stroke="#e61b1b" stroke-width="17" stroke-linejoin="round" stroke-linecap="round" />
    </svg>
  </div>
</template>

<style>
html, body { margin: 0; background: #fff; }
</style>

<style scoped>
* { box-sizing: border-box; }
.page { position: relative; display: flex; flex-direction: column; min-height: 100vh; padding: 0 39px 29px 0; background: #fff; color: #8e8e8e; font: 10px/14px "Open Sans", "Noto Sans CJK JP", sans-serif; font-feature-settings: "palt"; white-space: nowrap; }
h1, h2, h3, p, dl, dd { margin: 0; font-size: inherit; font-weight: 400; }
em { font-style: normal; color: #2d8ceb; }
i { display: block; flex: none; }
svg { display: block; flex: none; }
button, input, select { margin: 0; padding: 0; border: 0; background: none; color: inherit; font: inherit; font-feature-settings: inherit; outline: 0; }
.titlebar { position: relative; display: flex; align-items: center; height: 22px; padding-left: 2px; gap: 5px; }
.titlebar h1 { color: #8a8a8a; font-size: 11px; }
.logo { width: 16px; height: 15px; border-radius: 3px; background: #00005b; color: #a9a0ff; font-size: 9px; font-weight: 700; text-align: center; }
.winctl { display: flex; gap: 36px; margin-left: auto; padding-right: 19px; align-self: flex-start; padding-top: 4px; }
.strip { position: absolute; top: 0; left: 840px; width: 241px; height: 1px; background: linear-gradient(90deg, #2d8ceb 48px, #ddd 48px); }
.menubar { display: flex; gap: 17px; height: 21px; padding-left: 7px; color: #707070; align-items: center; }
.window { display: flex; flex-direction: column; flex: 1; background: #161616; }
.toolbar { display: flex; align-items: center; height: 25px; background: #232323; color: #b4b4b4; }
.grip { width: 3px; height: 19px; margin: 0 3px 0 5px; background: repeating-linear-gradient(#484848 0 1px, #232323 1px 3px); }
.toolgroup { display: flex; align-items: center; }
.toolgroup + .toolgroup::before { content: ""; width: 2px; height: 20px; margin: 0 3px 0 2px; background: #303030; }
.tool { display: flex; justify-content: center; width: 25px; }
.tool span { display: grid; place-items: center; width: 23px; height: 22px; }
.tool.on span { background: #121212; border: 1px solid #303030; border-radius: 2px; color: #2d8ceb; }
.tool.dim { color: #484848; }
.vsep { width: 1px; height: 16px; background: #383838; }
.wide { height: 24px; margin: 0 24px 0 23px; }
.auto { display: flex; align-items: center; gap: 4px; margin-left: 16px; color: #9c9c9c; font-size: 11px; }
input[type=checkbox] { position: relative; appearance: none; flex: none; width: 14px; height: 14px; border: 2px solid #8a8a8a; border-radius: 2px; }
input[type=checkbox]:checked { background: #a0a0a0; border-color: #a0a0a0; }
input[type=checkbox]:checked::after { content: ""; position: absolute; left: 3px; top: 0; width: 4px; height: 7px; border: solid #232323; border-width: 0 2px 2px 0; transform: rotate(45deg); }
.off input[type=checkbox] { border-color: #484848; }
.off input[type=checkbox]:checked { background: #484848; }
.spaces { display: flex; align-items: center; align-self: stretch; margin-left: auto; border-left: 1px solid #303030; color: #8e8e8e; font-size: 11px; }
.spaces button { padding: 0 22px; }
.spaces .current { display: flex; align-items: center; gap: 13px; padding-right: 0; color: #2d8ceb; font-size: 10px; }
.more { margin: 0 15px 0 19px; }
.syncicon { margin: 0 12px 0 5px; }
.help { display: flex; align-items: center; gap: 9px; width: 194px; height: 19px; margin-right: 5px; padding-left: 5px; background: #161616; border: 1px solid #303030; border-radius: 2px; color: #c0c0c0; font-size: 11px; }
.help input { flex: 1; min-width: 0; }
.help input::placeholder { color: #c0c0c0; }
main { display: grid; grid-template-columns: 217px minmax(0, 1fr) 360px 206px; gap: 4px; flex: 1; padding: 2px 1px 1px 2px; }
.panel { background: #232323; }
.col { display: flex; flex-direction: column; gap: 4px; min-width: 0; }
.head { display: flex; align-items: center; height: 28px; padding-left: 13px; gap: 12px; color: #8e8e8e; }
.head > svg { color: #a8a8a8; }
.kanji { font-size: 11px; }
.lit { color: #cfcfcf; }
.val { color: #3b8bd4; }
.rule { height: 2px; margin: 0 7px 0 5px; background: #303030; }
.closed { height: 30px; width: 204px; padding-left: 11px; line-height: 28px; border-bottom: 2px solid #161616; }
.left .head h2 { color: #bbb; }
.left .head { width: 194px; padding-left: 11px; }
.end { margin-left: auto; }
.painttop { display: flex; margin-top: 8px; height: 41px; }
dl { display: grid; grid-template-columns: 65px 46px; grid-auto-rows: 18px; align-items: center; }
dt, .prow > label:first-child, .lab { text-align: right; font-size: 11px; }
dd { padding-left: 6px; }
.tip { display: flex; flex-direction: column; align-items: center; width: 16px; margin-top: 5px; color: #9a9a9a; }
.tip i { width: 9px; height: 9px; border-radius: 50%; background: radial-gradient(#fff 10%, #888 45%, #232323 70%); }
.swatches { position: relative; width: 44px; margin: 1px 0 0 28px; }
.swatches i { position: absolute; }
.swatches .fg { left: 1px; top: 0; width: 28px; height: 26px; border: 1px solid #000; background: red; box-shadow: inset 0 0 0 1px #fff; }
.swatches .bg { left: 15px; top: 14px; width: 26px; height: 25px; border: 1px solid #000; background: #fff; }
.swap { position: absolute; right: 1px; top: 1px; color: #b0b0b0; }
.swatches .mini { left: 0; top: 29px; width: 7px; height: 7px; background: #000; border: 1px solid #ccc; box-shadow: 3px 3px 0 #999; }
.prow { display: flex; align-items: center; height: 23px; color: #8e8e8e; }
.prow > label:first-child, .lab { width: 65px; margin-right: 4px; }
.prow > svg { color: #b0b0b0; margin-left: 1px; }
.sel { position: relative; display: flex; align-items: center; width: 115px; height: 19px; background: #1a1a1a; border: 1px solid #303030; border-radius: 2px; color: #d0d0d0; }
.sel select { appearance: none; width: 100%; height: 100%; padding-left: 7px; opacity: 1; }
.sel svg { position: absolute; right: 4px; color: #a8a8a8; pointer-events: none; }
.sel.full { width: 135px; font-size: 11px; }
.sel.full select { padding-left: 5px; }
.prow.off, .off .sel, .sel.off { color: #4c4c4c; }
.off .sel, .sel.off { background: #282828; border-color: #282828; }
.prow.off svg, .off .sel svg, .sel.off svg { color: #444; }
.sel.full svg { right: -1px; }
.dimtext { color: #484848; }
.prow .dimtext { margin-left: 4px; }
.clone { height: 21px; padding-left: 18px; gap: 8px; font-size: 11px; }
.clone i { flex: 1; height: 1px; margin-right: 13px; background: #3c3c3c; }
.presets { height: 24px; }
.presets button { display: grid; place-items: center; width: 25px; height: 22px; margin: 0 2px 0 0; }
.presets .lab + button { margin-left: 2px; }
.presets .on { border: 1px solid #303030; background: #1d1d1d; }
.prow.presets .on svg { color: #24415f; }
.source { margin-top: 6px; }
.checks { height: 22px; padding-left: 8px; gap: 11px; font-size: 11px; }
.prow.checks label, .prow.over label { display: flex; align-items: center; gap: 3px; width: auto; margin: 0; }
.prow.over > label { font-size: 10px; }
.offset, .shift { height: 20px; }
.offset span:nth-child(1) { width: 101px; text-align: right; font-size: 11px; }
.offset span:nth-child(2) { width: 50px; padding-left: 4px; }
.prow.offset svg { margin-left: 33px; }
.shift { padding-left: 13px; gap: 6px; }
.shift span:first-child { font-size: 11px; }
.left .rule { width: 193px; margin: 2px 0 2px 7px; }
.over { height: 24px; padding-left: 10px; width: 205px; }
.over span { margin-left: auto; margin-right: 5px; }
.centre { display: flex; flex-direction: column; }
.viewhead { gap: 9px; }
.centre .viewhead { gap: 8px; padding-left: 12px; }
.viewhead .sq + svg { margin-left: 3px; }
.sq { width: 10px; height: 10px; background: #a89878; }
.sq.yellow { background: #e4d84c; }
.tabs { height: 24px; padding: 2px 0 0 19px; border-bottom: 1px solid #000; }
.tabs button { width: 70px; height: 18px; padding-left: 10px; border: 1px solid #303030; border-radius: 2px; background: #181818; color: #2d8ceb; text-align: left; }
.stage { flex: 1; display: flex; justify-content: center; padding: 4px 2px 10px 0; min-height: 0; }
.canvas { aspect-ratio: 1; background: #000; }
.viewbar { display: flex; align-items: center; height: 23px; padding-left: 3px; border-top: 1px solid #151515; color: #b4b4b4; }
.viewbar .sel { margin: 0 4px 0 5px; color: #b8b8b8; }
.zoomsel.sel { width: 70px; }
.ressel.sel { width: 87px; }
.ressel + .vsep + .vb { margin-left: 1px; }
.vb { display: grid; place-items: center; width: 22px; height: 20px; }
.vb.box { background: #151515; border: 1px solid #2c2c2c; }
.vb.on { color: #2d8ceb; }
.vb.dim { color: #484848; }
.gap { margin: 0 4px; }
.viewbar .expo { margin: 0 16px 0 1px; color: #2d8ceb; }
.cam { margin-left: 4px; }
.cam + .vb + .vsep { margin: 0 4px; }
.time { width: 69px; height: 19px; border: 1px solid #303030; border-radius: 2px; background: #1b1b1b; color: #a0a0a0; }
.project { height: 428px; display: flex; flex-direction: column; }
.project .head { gap: 23px; padding-left: 11px; }
.tab { display: flex; align-items: center; gap: 12px; height: 26px; border-bottom: 2px solid #c0c0c0; }
.project .head .tab { width: 73px; justify-content: space-between; margin-bottom: -2px; }
.info { display: flex; gap: 5px; margin: 6px 0 41px 6px; color: #9a9a9a; }
.info div:last-child { margin-top: -2px; }
.info p { display: flex; align-items: center; gap: 5px; height: 13px; }
.thumb { width: 65px; height: 65px; background: #000; }
.psearch { display: flex; align-items: center; height: 19px; margin: 0 6px 6px; padding-left: 6px; background: #161616; border: 1px solid #303030; border-radius: 2px; color: #a8a8a8; }
.psearch input { flex: 1; }
table { width: 359px; table-layout: fixed; border-collapse: collapse; color: #8e8e8e; font-size: 11px; }
th, td { height: 19px; padding: 0; font-weight: 400; text-align: left; line-height: 17px; }
thead tr { background: #2e2e2e; border: solid #000; border-width: 1px 0; color: #b0b0b0; }
.c0 { width: 16px; }
.c1 { width: 162px; }
.c2 { width: 21px; }
.c3 { width: 77px; }
.c4 { width: 64px; }
th { padding-left: 6px; background: linear-gradient(#111, #111) no-repeat left center / 1px 11px; }
th.c0, th:last-child { background: none; padding-left: 0; }
th.c2 { padding-left: 4px; }
th.c1 span { display: flex; align-items: center; justify-content: space-between; padding-right: 4px; }
.tri { border: 6px solid transparent; border-top-width: 0; border-bottom: 5px solid #2d8ceb; }
td.c0 svg { margin-left: 4px; }
td.c2 { padding-left: 6px; }
td.c3 { padding-left: 7px; }
td.c5 { padding-left: 4px; color: #b4b4b4; }
.name span { display: flex; align-items: center; height: 18px; padding: 0 1px; color: #b4b4b4; }
.name b { flex: 1; margin-left: 1px; padding-left: 2px; font-weight: 400; color: #c0c0c0; }
.selected { background: #2e2e2e; }
.selected .name b { background: #9c9c9c; color: #1a1a1a; }
.pfoot { display: flex; align-items: center; gap: 9px; height: 18px; margin-top: auto; padding-left: 4px; border-top: 1px solid #000; background: #262626; color: #a8a8a8; }
.bpc { width: 47px; height: 15px; background: #1a1a1a; border: 1px solid #2c2c2c; font-size: 9px; line-height: 12px; }
.pill { width: 57px; height: 15px; border-radius: 8px; background: #333; }
.effects { flex: 1; }
.effects .head { height: 48px; padding: 0 0 20px 11px; border-bottom: 1px solid #000; }
.align { height: 124px; }
.arow { display: flex; align-items: center; height: 22px; padding-left: 8px; }
.arow .sel { width: 111px; height: 18px; margin-left: auto; }
.second { height: 18px; }
.aicons { display: flex; height: 20px; padding-left: 3px; color: #484848; }
.aicons button { display: grid; place-items: center; width: 34px; }
.aicons.first { height: 27px; }
.fontrow { display: flex; height: 43px; margin: 8px 0 5px 5px; }
.fonts { display: grid; gap: 5px; }
.fonts .sel { width: 123px; color: #b4b4b4; }
.fonts select { padding-left: 5px; }
.split::after { content: ""; position: absolute; right: 18px; top: 0; height: 17px; border-left: 1px solid #303030; }
.pick { display: flex; flex-direction: column; gap: 5px; margin: 3px 5px 0 4px; color: #a8a8a8; }
.bw { width: 20px; height: 17px; border: 1px solid #999; background: linear-gradient(#000 7px, #888 7px 9px, #fff 9px); }
.fills { position: relative; }
.crow { display: grid; grid-template-columns: 25px 65px 13px 34px 41px 14px; align-items: center; height: 20px; padding-left: 5px; color: #7c7c7c; }
.crow.tall { height: 22px; }
.crow > svg { color: #909090; justify-self: center; }
.crow.low { grid-template-columns: 25px 43px 35px 34px 41px 14px; }
.crow.low > svg:nth-child(3) { justify-self: start; margin-left: 3px; }
.crow.stroke { grid-template-columns: 25px 43px 13px 115px; height: 28px; }
.crow.stroke > svg:first-child { color: #b0b0b0; justify-self: start; margin-left: 2px; }
.crow .sel { width: 115px; background: #1f1f1f; }
.gi { display: flex; align-items: flex-end; height: 19px; color: #b4b4b4; line-height: 14px; }
.gi b { font-family: "Liberation Serif", serif; font-weight: 700; }
.sm { font-size: 12px; }
.lg { font-size: 19px; }
.md { font-size: 16px; line-height: 12px; }
.stack { display: flex; flex-direction: column; align-items: center; line-height: 9px; }
.stack u { display: block; font: 9px/10px "Liberation Sans", sans-serif; text-decoration: none; }
.va { flex-direction: column; align-items: center; justify-content: center; width: 18px; font-size: 12px; line-height: 13px; }
.crow > .va:nth-child(4) { width: 22px; }
.va mark { display: block; padding: 0 1px; background: #b4b4b4; color: #1a1a1a; font-size: 11px; font-weight: 700; line-height: 12px; }
.va small { font-size: 10px; line-height: 12px; }
.base { font-size: 12px; }
.base .stack { font-size: 9px; line-height: 8px; }
.r2 { margin-top: 5px; }
.r3 { margin-top: 1px; }
.crow.low.tall { margin-top: 1px; }
.r4 { margin-top: 6px; }
.styles { display: grid; grid-template-columns: 25px 26px 28px 29px 27px 24px; height: 30px; padding: 3px 0 0 32px; align-items: center; color: #b4b4b4; font: 14px/16px "Liberation Serif", serif; }
.styles .it { font-style: italic; }
.styles button { text-align: left; }
.styles small { font-size: 10px; }
.styles sup, .styles sub { font-size: 8px; line-height: 0; }
.char { height: 253px; }
.para { height: 152px; }
.justify { display: flex; align-items: center; height: 30px; padding-left: 5px; color: #b4b4b4; }
.justify button { display: grid; place-items: center; width: 23px; height: 23px; margin: 0 1px; }
.justify .jL, .justify .jF { margin-left: 6px; }
.on:not(.vb):not(.tool) { background: #121212; border: 1px solid #303030; border-radius: 2px; color: #2d8ceb; }
.para .rule { margin: 1px 19px 0 7px; }
.indents { display: grid; grid-template-columns: 71px 66px 60px; grid-template-rows: 18px 23px; align-items: center; padding-left: 7px; color: #7c7c7c; }
.indents span { display: flex; align-items: center; gap: 5px; }
.indents span svg { color: #b4b4b4; }
.indents .dir { gap: 0; }
.dir button { display: grid; place-items: center; width: 22px; height: 23px; }
.indents .dir .on svg { color: #2d8ceb; }
.cc { flex: 1; display: flex; flex-direction: column; min-height: 0; }
.cc .head { height: 27px; gap: 9px; }
.ccbar { display: flex; align-items: center; justify-content: space-between; margin: 0; padding: 0 18px 0 12px; background: #262626; color: #dcdcdc; font-size: 11px; font-feature-settings: normal; }
.ccbar a, .ccbar button { display: flex; align-items: center; gap: 6px; color: inherit; font-weight: 500; text-decoration: none; }
.ccbar .grey { color: #b4b4b4; }
.lib { height: 42px; }
.ccsearch { height: 31px; gap: 8px; margin: 0 13px; padding: 0 7px 0 0; border-bottom: 1px solid #4a4a4a; }
.ccsearch input { flex: 1; min-width: 0; }
.ccsearch input::placeholder { color: #7a7a7a; }
.group { height: 40px; border-bottom: 1px solid #1e1e1e; }
.drop { flex: 1 0 0; display: flex; flex-direction: column; align-items: center; min-height: 0; padding: 10px 0 0; overflow: hidden; background: #2b2b2b; text-align: center; font-feature-settings: normal; }
.drop h3 { margin-top: 28px; color: #b4b4b4; font-size: 14px; font-weight: 500; line-height: 19px; }
.drop p { margin-top: 11px; color: #6c6c6c; font-size: 11px; font-weight: 500; line-height: 15px; }
.ccfoot { display: flex; align-items: center; gap: 11px; height: 25px; padding: 0 22px 0 17px; border-top: 1px solid #000; color: #c0c0c0; }
.bin { color: #777; }
.marker { position: absolute; right: 0; top: 0; width: 290px; height: 100%; pointer-events: none; }
</style>
